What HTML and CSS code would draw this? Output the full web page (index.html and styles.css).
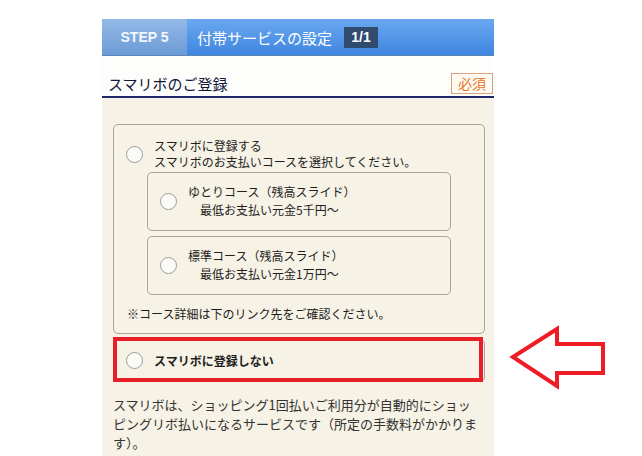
FILE: index.html
```html
<!DOCTYPE html>
<html lang="ja">
<head>
<meta charset="utf-8">
<title>STEP 5 付帯サービスの設定</title>
<link rel="stylesheet" href="styles.css">
</head>
<body>
<div class="page">
  <div class="step-bar">
    <div class="step-label">STEP 5</div>
    <div class="step-title"><span>付帯サービスの設定</span><span class="step-count">1/1</span></div>
  </div>
  <div class="section-head">
    <h2 class="section-title">スマリボのご登録</h2>
    <span class="required">必須</span>
  </div>
  <div class="section-body">
    <div class="option-group">
      <div class="opt-row">
        <span class="radio"></span>
        <div class="opt-text">スマリボに登録する<br>スマリボのお支払いコースを選択してください。</div>
      </div>
      <div class="course">
        <span class="radio"></span>
        <div class="course-text">ゆとりコース（残高スライド）<br><span class="course-sub">最低お支払い元金5千円～</span></div>
      </div>
      <div class="course course-next">
        <span class="radio"></span>
        <div class="course-text">標準コース（残高スライド）<br><span class="course-sub">最低お支払い元金1万円～</span></div>
      </div>
      <p class="note">※コース詳細は下のリンク先をご確認ください。</p>
    </div>
    <div class="option-no">
      <span class="radio"></span>
      <span class="no-label">スマリボに登録しない</span>
      <div class="highlight"></div>
    </div>
    <p class="desc">スマリボは、ショッピング1回払いご利用分が自動的にショッ<br>ピングリボ払いになるサービスです（所定の手数料がかかりま<br>す）。</p>
  </div>
</div>
<svg class="arrow" width="105" height="70" viewBox="0 0 105 70" aria-hidden="true">
  <polygon points="8,35 52,7 52,22 98,22 98,51 52,51 52,64" fill="none" stroke="#ee1c25" stroke-width="4" stroke-linejoin="miter"/>
</svg>
</body>
</html>
```

FILE: styles.css
```css
html, body {
  margin: 0;
  padding: 0;
  height: 100%;
  overflow: hidden;
  background: #ffffff;
}

body {
  font-family: "Noto Sans CJK JP", "Noto Sans", sans-serif;
  color: #222;
  position: relative;
}

.page {
  margin: 19px 0 0 102px;
  width: 392px;
  height: 437px;
  display: flex;
  flex-direction: column;
}

/* STEP bar */
.step-bar {
  height: 36px;
  display: flex;
  border-bottom: 1px solid #5d86b6;
  flex: none;
}

.step-label {
  width: 85px;
  display: flex;
  align-items: center;
  justify-content: center;
  background: linear-gradient(#93b9e6, #6c9bd6);
  color: #f2f7fd;
  font-family: "Liberation Sans", Arial, sans-serif;
  font-weight: 700;
  font-size: 14px;
}

.step-title {
  flex: 1;
  display: flex;
  align-items: center;
  gap: 12px;
  padding-left: 10px;
  background: linear-gradient(#6aa8f0, #3f86e0);
  color: #ffffff;
  font-size: 15px;
}

.step-count {
  width: 34px;
  height: 21px;
  display: flex;
  align-items: center;
  justify-content: center;
  background: #2f4b6e;
  color: #ffffff;
  font-family: "Liberation Sans", Arial, sans-serif;
  font-weight: 700;
  font-size: 14px;
}

/* Section heading */
.section-head {
  flex: none;
  display: flex;
  align-items: flex-end;
  justify-content: space-between;
  padding: 0 1px 2px 6px;
  box-sizing: border-box;
  height: 42px;
  background: #fdfdfb;
  border-bottom: 2px solid #1c2868;
}

.section-title {
  margin: 0;
  font-size: 15px;
  font-weight: 400;
  line-height: 21px;
  color: #10163a;
}

.required {
  border: 1px solid #d8a27c;
  background: #fffaf2;
  color: #e3772a;
  font-size: 14px;
  line-height: 19px;
  padding: 0 6px;
}

/* Section body */
.section-body {
  flex: 1;
  background: #f6f2e5;
  padding: 26px 9px 0 11px;
}

.option-group {
  border: 1px solid #aaa598;
  border-radius: 5px;
  padding: 13px 12px 10px 12px;
}

.radio {
  flex: none;
  width: 15px;
  height: 15px;
  border: 1px solid #9c9c9c;
  border-radius: 50%;
  background: #fbfbf8;
}

.opt-row {
  display: flex;
  align-items: center;
  gap: 11px;
}

.opt-text {
  font-size: 12px;
  line-height: 16px;
  color: #1e1e1e;
}

.course {
  margin: 2px 21px 0 21px;
  border: 1px solid #aaa598;
  border-radius: 5px;
  padding: 10px 12px 11px 12px;
  display: flex;
  align-items: center;
  gap: 11px;
}

.course-next {
  margin-top: 5px;
}

.course-text {
  font-size: 12px;
  line-height: 18px;
  color: #1e1e1e;
}

.course-sub {
  padding-left: 12px;
}

.note {
  margin: 10px 0 0 1px;
  font-size: 12px;
  line-height: 18px;
  color: #1e1e1e;
}

.option-no {
  position: relative;
  margin-top: 5px;
  border: 1px solid #aaa598;
  border-radius: 5px;
  padding: 12px 12px;
  display: flex;
  align-items: center;
  gap: 11px;
}

.no-label {
  font-size: 12px;
  line-height: 16px;
  font-weight: 700;
  color: #1e1e1e;
}

.highlight {
  position: absolute;
  top: -3px;
  left: -1px;
  right: 1px;
  bottom: -1px;
  border: 4px solid #e81f28;
}

.desc {
  margin: 13px 0 0 0;
  font-size: 13px;
  line-height: 19px;
  color: #333;
}

.arrow {
  position: absolute;
  left: 505px;
  top: 322px;
}
```
